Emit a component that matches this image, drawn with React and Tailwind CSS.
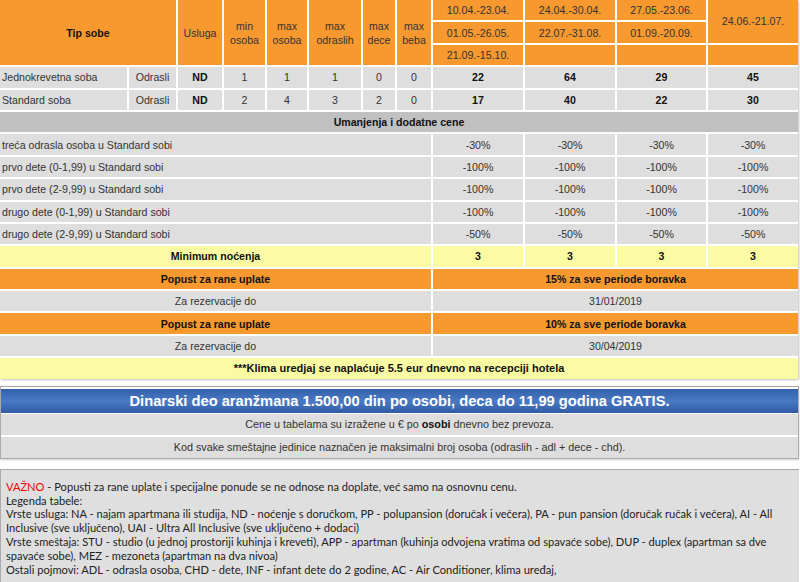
const cell = 'h-[20.4px] p-0 px-[2px] text-center align-middle';
const grey = 'bg-[#dedede]';
const orange = 'bg-[#f7992f]';
const yellow = 'bg-[#fbfba3]';

const periods = [
  ['10.04.-23.04.', '24.04.-30.04.', '27.05.-23.06.'],
  ['01.05.-26.05.', '22.07.-31.08.', '01.09.-20.09.'],
  ['21.09.-15.10.', '', ''],
];

const rooms = [
  { name: 'Jednokrevetna soba', min: 1, max: 1, adl: 1, chd: 0, inf: 0, prices: [22, 64, 29, 45] },
  { name: 'Standard soba', min: 2, max: 4, adl: 3, chd: 2, inf: 0, prices: [17, 40, 22, 30] },
];

const discounts = [
  ['treća odrasla osoba u Standard sobi', '-30%'],
  ['prvo dete (0-1,99) u Standard sobi', '-100%'],
  ['prvo dete (2-9,99) u Standard sobi', '-100%'],
  ['drugo dete (0-1,99) u Standard sobi', '-100%'],
  ['drugo dete (2-9,99) u Standard sobi', '-50%'],
];

const early = [
  ['15% za sve periode boravka', '31/01/2019'],
  ['10% za sve periode boravka', '30/04/2019'],
];

function PriceTable() {
  return (
    <div className="w-[798px] overflow-hidden shadow-[1px_1px_2px_rgba(0,0,0,0.25)]">
      <table className="w-[802px] -ml-[2px] -mt-[2px] -mb-[2px] table-fixed border-separate border-spacing-[2px] text-[10.6px] leading-[14px] text-[#333]">
        <colgroup>
          <col className="w-[127px]" />
          <col className="w-[47px]" />
          <col className="w-[44px]" />
          <col className="w-[41px]" />
          <col className="w-[40px]" />
          <col className="w-[52px]" />
          <col className="w-[32px]" />
          <col className="w-[34px]" />
          <col className="w-[90px]" />
          <col className="w-[90px]" />
          <col className="w-[89px]" />
          <col className="w-[90px]" />
        </colgroup>
        <tbody>
          <tr>
            <td rowSpan={3} colSpan={2} className={`${cell} ${orange} font-bold text-[#111]`}>Tip sobe</td>
            <td rowSpan={3} className={`${cell} ${orange}`}>Usluga</td>
            <td rowSpan={3} className={`${cell} ${orange}`}>min<br />osoba</td>
            <td rowSpan={3} className={`${cell} ${orange}`}>max<br />osoba</td>
            <td rowSpan={3} className={`${cell} ${orange}`}>max<br />odraslih</td>
            <td rowSpan={3} className={`${cell} ${orange}`}>max<br />dece</td>
            <td rowSpan={3} className={`${cell} ${orange}`}>max<br />beba</td>
            {periods[0].map((p, i) => (
              <td key={i} className={`${cell} ${orange}`}>{p}</td>
            ))}
            <td rowSpan={2} className={`${cell} ${orange}`}>24.06.-21.07.</td>
          </tr>
          <tr>
            {periods[1].map((p, i) => (
              <td key={i} className={`${cell} ${orange}`}>{p}</td>
            ))}
          </tr>
          <tr>
            {periods[2].map((p, i) => (
              <td key={i} className={`${cell} ${orange}`}>{p}</td>
            ))}
            <td className={`${cell} ${orange}`}></td>
          </tr>

          {rooms.map((r) => (
            <tr key={r.name}>
              <td className={`${cell} ${grey} text-left`}>{r.name}</td>
              <td className={`${cell} ${grey}`}>Odrasli</td>
              <td className={`${cell} ${grey} font-bold text-[#111]`}>ND</td>
              <td className={`${cell} ${grey}`}>{r.min}</td>
              <td className={`${cell} ${grey}`}>{r.max}</td>
              <td className={`${cell} ${grey}`}>{r.adl}</td>
              <td className={`${cell} ${grey}`}>{r.chd}</td>
              <td className={`${cell} ${grey}`}>{r.inf}</td>
              {r.prices.map((p, i) => (
                <td key={i} className={`${cell} ${grey} font-bold text-[#111]`}>{p}</td>
              ))}
            </tr>
          ))}

          <tr>
            <td colSpan={12} className={`${cell} bg-[#c0c0c0] font-bold text-[#111]`}>Umanjenja i dodatne cene</td>
          </tr>
          {discounts.map(([label, v]) => (
            <tr key={label}>
              <td colSpan={8} className={`${cell} ${grey} text-left`}>{label}</td>
              {[0, 1, 2, 3].map((i) => (
                <td key={i} className={`${cell} ${grey}`}>{v}</td>
              ))}
            </tr>
          ))}
          <tr>
            <td colSpan={8} className={`${cell} ${yellow} font-bold text-[#111]`}>Minimum noćenja</td>
            {[0, 1, 2, 3].map((i) => (
              <td key={i} className={`${cell} ${yellow} font-bold text-[#111]`}>3</td>
            ))}
          </tr>

          {early.map(([pct, date]) => (
            <>
              <tr key={pct}>
                <td colSpan={8} className={`${cell} ${orange} font-bold text-[#111]`}>Popust za rane uplate</td>
                <td colSpan={4} className={`${cell} ${orange} font-bold text-[#111]`}>{pct}</td>
              </tr>
              <tr key={date}>
                <td colSpan={8} className={`${cell} ${grey}`}>Za rezervacije do</td>
                <td colSpan={4} className={`${cell} ${grey}`}>{date}</td>
              </tr>
            </>
          ))}
          <tr>
            <td colSpan={12} className={`${cell} ${yellow} font-bold text-[11px] text-[#111]`}>
              ***Klima uredjaj se naplaćuje 5.5 eur dnevno na recepciji hotela
            </td>
          </tr>
        </tbody>
      </table>
    </div>
  );
}

function InfoBox() {
  return (
    <div className="mt-[7px] w-[799px] border border-[#aaa] bg-white shadow-[0_1px_2px_rgba(0,0,0,0.2)]">
      <div className="mt-[2px] flex h-[24px] items-center justify-center bg-[linear-gradient(#3360ab,#4a79c4_50%,#2f5ba4)] text-[14.7px] font-bold text-white">
        Dinarski deo aranžmana 1.500,00 din po osobi, deca do 11,99 godina GRATIS.
      </div>
      <div className="mt-[1px] flex h-[21px] items-center justify-center bg-[#dedede] text-[10.8px] text-[#333]">
        Cene u tabelama su izražene u € po&nbsp;<b className="text-[#111]">osobi</b>&nbsp;dnevno bez prevoza.
      </div>
      <div className="mt-[2px] flex h-[21px] items-center justify-center bg-[#dedede] text-[10.8px] text-[#333]">
        Kod svake smeštajne jedinice naznačen je maksimalni broj osoba (odraslih - adl + dece - chd).
      </div>
    </div>
  );
}

function Legend() {
  return (
    <div className="mt-[10px] min-h-[120px] w-[799px] border-t border-l border-[#aaa] bg-[#dfdfdf] px-[5px] pt-[10px] text-[11.1px] leading-[13.9px] text-[#222] [font-family:Lato,sans-serif]">
      <p>
        <span className="text-[#e00]">VAŽNO</span> - Popusti za rane uplate i specijalne ponude se ne odnose na doplate, već samo na osnovnu cenu.
      </p>
      <p>Legenda tabele:</p>
      <p>
        Vrste usluga: NA - najam apartmana ili studija, ND - noćenje s doručkom, PP - polupansion (doručak i večera), PA - pun pansion (doručak ručak i večera), AI - All Inclusive (sve uključeno), UAI - Ultra All Inclusive (sve uključeno + dodaci)
      </p>
      <p>
        Vrste smeštaja: STU - studio (u jednoj prostoriji kuhinja i kreveti), APP - apartman (kuhinja odvojena vratima od spavaće sobe), DUP - duplex (apartman sa dve spavaće sobe), MEZ - mezoneta (apartman na dva nivoa)
      </p>
      <p>Ostali pojmovi: ADL - odrasla osoba, CHD - dete, INF - infant dete do 2 godine, AC - Air Conditioner, klima uređaj,</p>
    </div>
  );
}

export default function App() {
  return (
    <div className="h-[582px] w-[800px] overflow-hidden bg-white [font-family:'Liberation_Sans',Arial,sans-serif]">
      <PriceTable />
      <InfoBox />
      <Legend />
    </div>
  );
}
